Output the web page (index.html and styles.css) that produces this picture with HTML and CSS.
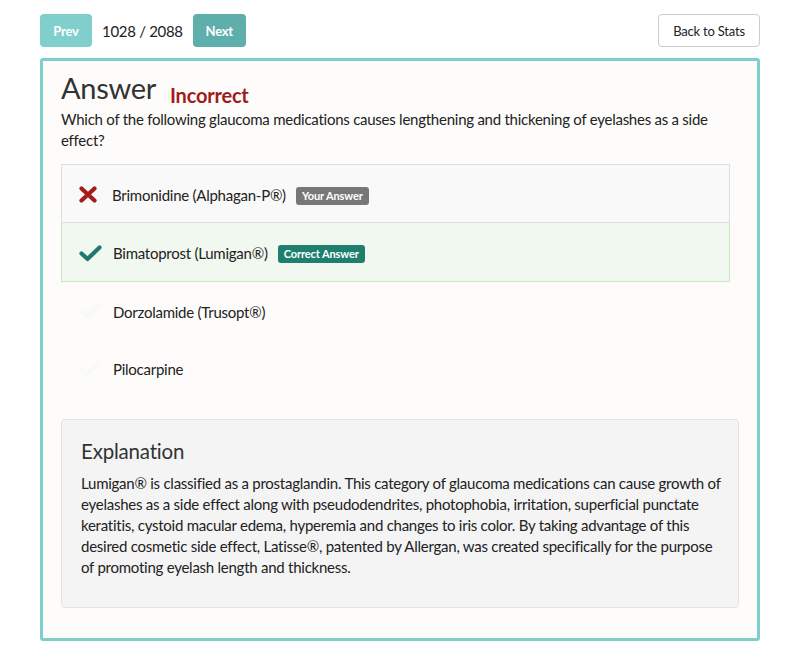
FILE: index.html
```html
<!DOCTYPE html>
<html>
<head>
<meta charset="utf-8">
<link rel="stylesheet" href="styles.css">
</head>
<body>
<div class="page">
  <div class="topbar">
    <div class="pager">
      <button class="btn btn-prev">Prev</button>
      <span class="count">1028 / 2088</span>
      <button class="btn btn-next">Next</button>
    </div>
    <button class="btn-back">Back to Stats</button>
  </div>
  <div class="card">
    <div class="title-row">
      <h1 class="title">Answer</h1>
      <span class="status">Incorrect</span>
    </div>
    <p class="question">Which of the following glaucoma medications causes lengthening and thickening of eyelashes as a side effect?</p>
    <ul class="options">
      <li class="option option-wrong">
        <span class="icon"><svg width="18" height="17" viewBox="0 0 18 17"><path d="M2.5 2.5 L15.5 14.5 M15.5 2.5 L2.5 14.5" stroke="#a31d1d" stroke-width="4.2" stroke-linecap="round"/></svg></span>
        <span class="opt-text">Brimonidine (Alphagan-P®)</span>
        <span class="label label-grey">Your Answer</span>
      </li>
      <li class="option option-right">
        <span class="icon"><svg width="23" height="17" viewBox="0 0 23 17"><path d="M2.5 8.5 L8.5 14 L20.5 2.5" fill="none" stroke="#1f7a6d" stroke-width="4.2" stroke-linecap="round" stroke-linejoin="round"/></svg></span>
        <span class="opt-text">Bimatoprost (Lumigan®)</span>
        <span class="label label-green">Correct Answer</span>
      </li>
      <li class="option">
        <span class="icon"><svg width="23" height="17" viewBox="0 0 23 17"><path d="M2.5 8.5 L8.5 14 L20.5 2.5" fill="none" stroke="#f9f9f7" stroke-width="4.2" stroke-linecap="round" stroke-linejoin="round"/></svg></span>
        <span class="opt-text">Dorzolamide (Trusopt®)</span>
      </li>
      <li class="option">
        <span class="icon"><svg width="23" height="17" viewBox="0 0 23 17"><path d="M2.5 8.5 L8.5 14 L20.5 2.5" fill="none" stroke="#f9f9f7" stroke-width="4.2" stroke-linecap="round" stroke-linejoin="round"/></svg></span>
        <span class="opt-text">Pilocarpine</span>
      </li>
    </ul>
    <div class="well">
      <h2 class="well-title">Explanation</h2>
      <p class="well-text">Lumigan® is classified as a prostaglandin. This category of glaucoma medications can cause growth of eyelashes as a side effect along with pseudodendrites, photophobia, irritation, superficial punctate keratitis, cystoid macular edema, hyperemia and changes to iris color. By taking advantage of this desired cosmetic side effect, Latisse®, patented by Allergan, was created specifically for the purpose of promoting eyelash length and thickness.</p>
    </div>
  </div>
</div>
</body>
</html>
```

FILE: styles.css
```css
* { box-sizing: border-box; }
body {
  margin: 0;
  background: #fff;
  font-family: Lato, "Noto Sans", sans-serif;
  color: #333;
}
.page {
  width: 720px;
  margin-left: 40px;
  padding-top: 14px;
}
.topbar {
  display: flex;
  justify-content: space-between;
  align-items: center;
  height: 33px;
}
.pager {
  display: flex;
  align-items: center;
}
.btn {
  height: 33px;
  border: none;
  border-radius: 4px;
  color: #fff;
  font-family: Lato, sans-serif;
  font-weight: bold;
  font-size: 13px;
  letter-spacing: -0.2px;
  padding: 0;
}
.btn-prev {
  background: #80cfcc;
  width: 52px;
}
.btn-next {
  background: #5eaeab;
  width: 53px;
}
.count {
  font-size: 15px;
  letter-spacing: -0.3px;
  margin: 0 10px;
  color: #222;
}
.btn-back {
  height: 33px;
  width: 102px;
  background: #fff;
  border: 1px solid #ccc;
  border-radius: 4px;
  font-family: Lato, sans-serif;
  font-size: 13px;
  letter-spacing: -0.2px;
  color: #222;
  padding: 0;
}
.card {
  margin-top: 11px;
  border: 3px solid #7ecfcc;
  border-radius: 3px;
  background: #fdfcfa;
  padding: 8px 18px 30px 18px;
  height: 583px;
}
.title-row {
  display: flex;
  align-items: baseline;
}
.title {
  margin: 0;
  font-size: 29px;
  font-weight: normal;
  line-height: 37px;
  color: #333;
  letter-spacing: -0.3px;
}
.status {
  margin-left: 14px;
  font-size: 20px;
  font-weight: bold;
  color: #a01c1c;
  position: relative;
  top: 4px;
  letter-spacing: -0.2px;
}
.question {
  margin: 3px 0 0 0;
  font-size: 15px;
  letter-spacing: -0.25px;
  line-height: 21px;
  color: #222;
}
.options {
  list-style: none;
  margin: 13px 9px 0 0;
  padding: 0;
}
.option {
  display: flex;
  align-items: center;
  height: 57px;
  padding-left: 17px;
  padding-top: 2px;
  font-size: 15px;
  letter-spacing: -0.25px;
  border: 1px solid transparent;
}
.option-wrong {
  background: #f9f9f9;
  border-color: #dedede;
  height: 59px;
}
.option-right {
  background: #f1f8ef;
  border-color: #cde5c4;
  border-top: none;
  height: 59px;
}
.icon {
  width: 34px;
  display: flex;
  align-items: center;
}
.option-wrong .icon { width: 33px; }
.opt-text { color: #222; }
.label {
  margin-left: 10px;
  font-size: 11px;
  font-weight: bold;
  color: #fff;
  padding: 2px 6px;
  border-radius: 3px;
  line-height: 14px;
  letter-spacing: -0.1px;
  position: relative;
  top: 1px;
}
.label-grey { background: #777; }
.label-green { background: #1e7f6e; }
.well {
  margin-top: 23px;
  background: #f4f4f4;
  border: 1px solid #e3e3e3;
  border-radius: 4px;
  padding: 17px 16px 29px 19px;
}
.well-title {
  margin: 0 0 8px 0;
  font-size: 20.5px;
  font-weight: normal;
  line-height: 28px;
  color: #333;
  letter-spacing: -0.2px;
}
.well-text {
  margin: 0;
  font-size: 15px;
  letter-spacing: -0.25px;
  line-height: 21px;
  color: #222;
}
```
